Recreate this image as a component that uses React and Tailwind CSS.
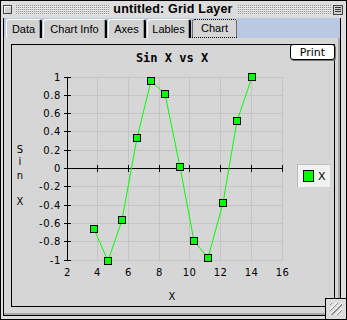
import React from "react";

const pts = [
  [94, 229], [108, 261], [122, 220], [137, 138], [151, 81], [165, 94],
  [180, 167], [194, 241], [208, 258], [223, 203], [237, 121], [252, 77],
];

const yLabels = ["1", "0.8", "0.6", "0.4", "0.2", "0", "-0.2", "-0.4", "-0.6", "-0.8", "-1"];
const xLabels = ["2", "4", "6", "8", "10", "12", "14", "16"];

const yAt = (i) => Math.floor(77 + i * 18.3) + 0.5;
const xAt = (j) => Math.floor(67 + j * 30.72) + 0.5;

const tabs = [
  { label: "Data", w: "w-[36px]" },
  { label: "Chart Info", w: "w-[64px]" },
  { label: "Axes", w: "w-[38px]" },
  { label: "Lables", w: "w-[44px]" },
  { label: "Chart", w: "w-[45px]", active: true },
];

function Stripes() {
  return (
    <div className="flex-1 h-[10px] bg-[conic-gradient(#8a8a8a_0_25%,#f4f4f4_0_50%,transparent_0)] bg-[length:2px_2px]" />
  );
}

function TitleBar() {
  return (
    <div className="h-[17px] flex items-center pl-[2px] pr-[3px] bg-[#dddddd]">
      <div className="w-[9px] h-[9px] border border-[#444] bg-[#cfcfcf] shadow-[inset_1px_1px_0_#fff]" />
      <div className="flex-1 flex items-center ml-[3px] mr-[2px] gap-[4px]">
        <Stripes />
        <span className="font-['Liberation_Sans',sans-serif] font-bold text-[12.5px] leading-none text-black tracking-[0.2px]">
          untitled: Grid Layer
        </span>
        <Stripes />
      </div>
      <div className="w-[10px] h-[10px] border border-[#444] bg-[#cfcfcf] flex flex-col justify-center gap-[1px] px-[1px]">
        <div className="h-px bg-[#333]" />
        <div className="h-px bg-[#333]" />
        <div className="h-px bg-[#333]" />
      </div>
    </div>
  );
}

function Chart() {
  return (
    <svg width="322" height="261" viewBox="12 45 322 261" className="block">
      <text x="172" y="62" textAnchor="middle" fontFamily="DejaVu Sans Mono" fontWeight="bold" fontSize="12">
        Sin X vs X
      </text>
      {yLabels.map((_, i) => (
        <line key={"gh" + i} x1="67" x2="283" y1={yAt(i)} y2={yAt(i)} stroke="#c4c4c4" />
      ))}
      {xLabels.map((_, j) => (
        <line key={"gv" + j} x1={xAt(j)} x2={xAt(j)} y1="77" y2="261" stroke="#c4c4c4" />
      ))}
      <line x1="67.5" x2="67.5" y1="77" y2="261" stroke="#000" />
      <line x1="67" x2="283" y1={yAt(5)} y2={yAt(5)} stroke="#000" />
      {yLabels.map((l, i) => (
        <g key={"y" + i}>
          <line x1="64" x2="71" y1={yAt(i)} y2={yAt(i)} stroke="#000" />
          <text x="61" y={yAt(i) + 3.5} textAnchor="end" fontFamily="DejaVu Sans" fontSize="10" letterSpacing="0.6">
            {l}
          </text>
        </g>
      ))}
      {xLabels.map((l, j) => (
        <g key={"x" + j}>
          {j > 0 && <line x1={xAt(j)} x2={xAt(j)} y1="165" y2="172" stroke="#000" />}
          <text x={xAt(j)} y="276" textAnchor="middle" fontFamily="DejaVu Sans" fontSize="10" letterSpacing="0.4">
            {l}
          </text>
        </g>
      ))}
      {["S", "i", "n", "X"].map((c, k) => (
        <text key={c + k} x="20" y={[153, 165, 179, 205][k]} textAnchor="middle" fontFamily="DejaVu Sans" fontSize="10">
          {c}
        </text>
      ))}
      <text x="172" y="300" textAnchor="middle" fontFamily="DejaVu Sans" fontSize="10">
        X
      </text>
      <polyline points={pts.map((p) => p.join(",")).join(" ")} fill="none" stroke="#00ff00" />
      {pts.map(([x, y], k) => (
        <rect key={k} x={x - 3.5} y={y - 3.5} width="7" height="7" fill="#00ff00" stroke="#000" />
      ))}
    </svg>
  );
}

export default function App() {
  return (
    <div className="w-[347px] h-[320px] border border-black bg-[#dddddd] flex flex-col relative overflow-hidden font-['Liberation_Sans',sans-serif]">
      <TitleBar />
      <div className="flex-1 flex flex-col ml-[2px] mr-[5px] mb-[3px] border-x border-b border-black">
        <div className="h-[20px] bg-[#bac9e1] flex items-end pl-[2px] gap-[1px]">
          {tabs.map((t) => (
            <div
              key={t.label}
              className={
                t.active
                  ? `${t.w} h-[19px] bg-[#d6d6d6] border border-dotted border-black rounded-t-[3px] flex items-center justify-center text-[11px] text-black`
                  : `${t.w} h-[19px] bg-[#d2d2d2] border-t border-l border-white border-r-2 border-r-black rounded-t-[3px] flex items-center justify-center text-[11px] text-black shadow-[inset_-1px_0_0_#9a9a9a]`
              }
            >
              {t.label}
            </div>
          ))}
        </div>
        <div className="flex-1 bg-[#d6d6d6] border-r-2 border-b-2 border-[#a8a8a8] pl-[7px] pr-[3px] pt-[6px] pb-[6px]">
          <div className="w-[324px] h-[263px] border border-black relative">
            <Chart />
            <button className="absolute top-[-1px] right-[-1px] w-[45px] h-[16px] bg-white border border-black rounded-[3px] text-[11px] leading-none font-['DejaVu_Sans',sans-serif] text-black shadow-[1px_1px_0_#777]">
              Print
            </button>
            <div className="absolute left-[285px] top-[119px] w-[33px] h-[23px] bg-[#f2f2f2] border-t border-l border-[#bdbdbd] flex items-center pl-[5px] gap-[4px]">
              <div className="w-[11px] h-[12px] bg-[#00ff00] border border-black" />
              <span className="text-[11px] font-['DejaVu_Sans',sans-serif] leading-none text-black">X</span>
            </div>
          </div>
        </div>
      </div>
      <div className="absolute right-0 bottom-0 w-[21px] h-[21px] bg-[#dddddd] border-t border-l border-black flex items-center justify-center">
        <div className="w-[12px] h-[12px] bg-[repeating-linear-gradient(135deg,#f6f6f6_0_1px,#888_1px_2px,transparent_2px_4px)]" />
      </div>
    </div>
  );
}
